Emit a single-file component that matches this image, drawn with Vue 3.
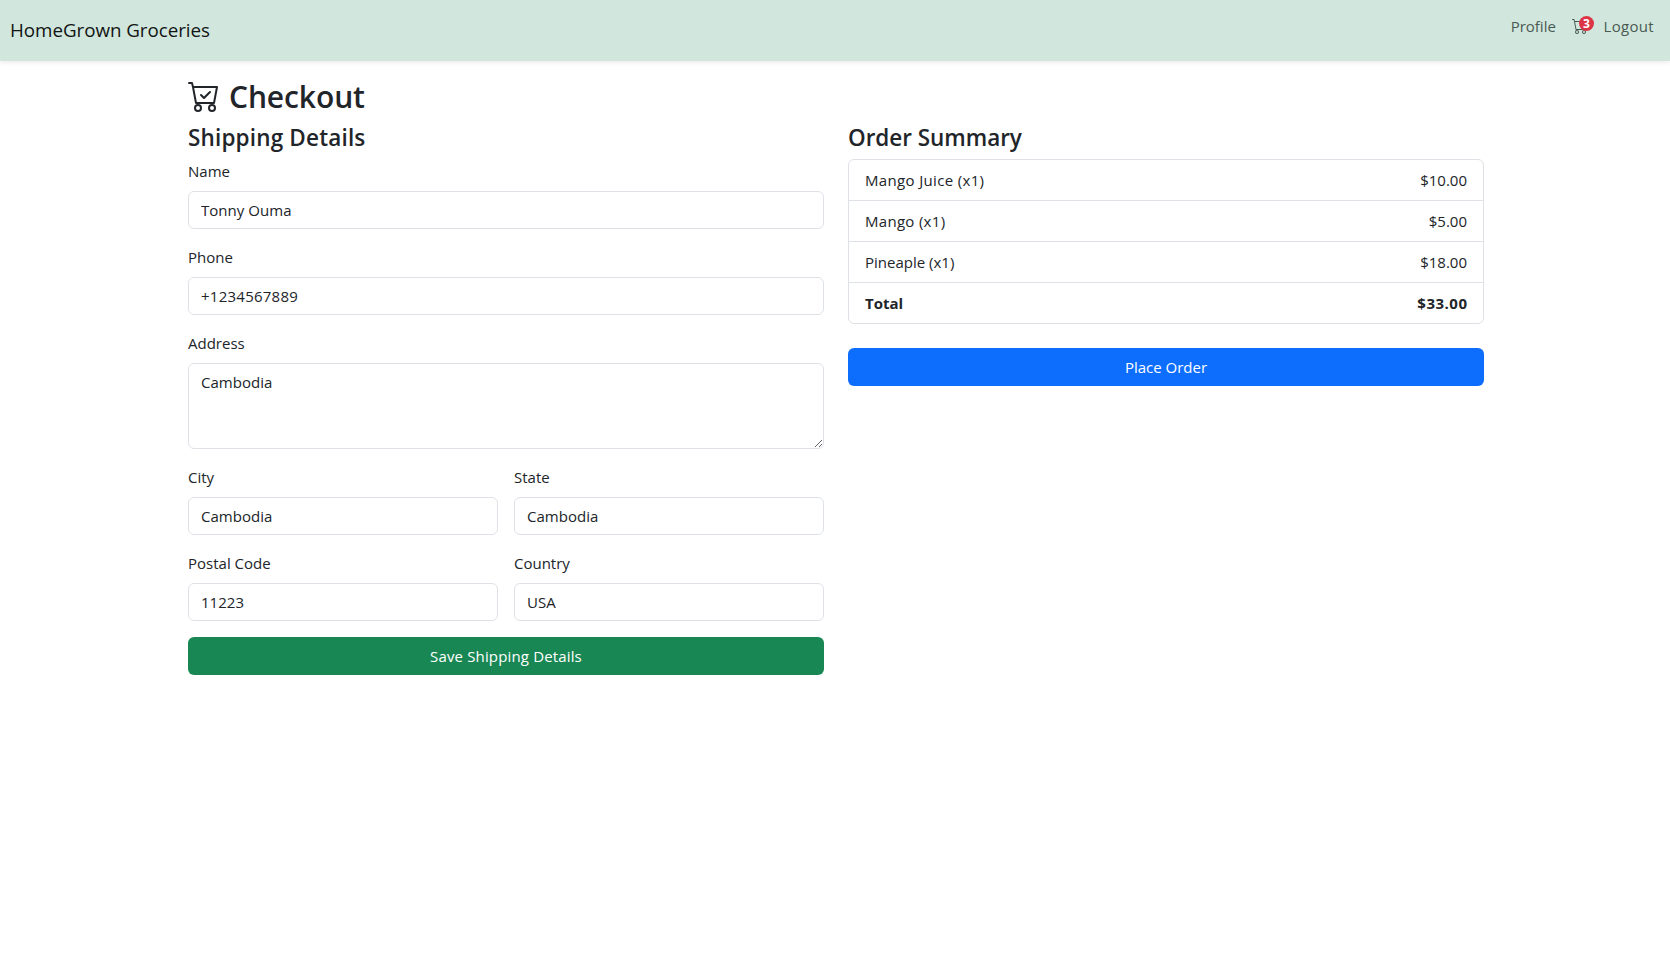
<script setup>
import { ref } from 'vue'

const form = ref({
  name: 'Tonny Ouma',
  phone: '+1234567889',
  address: 'Cambodia',
  city: 'Cambodia',
  state: 'Cambodia',
  postal: '11223',
  country: 'USA',
})
const items = [
  { label: 'Mango Juice (x1)', price: '$10.00' },
  { label: 'Mango (x1)', price: '$5.00' },
  { label: 'Pineaple (x1)', price: '$18.00' },
]
</script>

<template>
  <div class="page">
    <nav class="navbar">
      <a class="brand">HomeGrown Groceries</a>
      <div class="links">
        <a class="nav-link">Profile</a>
        <a class="cart">
          <svg width="16" height="16" viewBox="0 0 16 16" fill="currentColor"><path d="M0 1.5A.5.5 0 0 1 .5 1H2a.5.5 0 0 1 .485.379L2.89 3H14.5a.5.5 0 0 1 .491.592l-1.5 8A.5.5 0 0 1 13 12H4a.5.5 0 0 1-.491-.408L2.01 3.607 1.61 2H.5a.5.5 0 0 1-.5-.5M3.102 4l1.313 7h8.17l1.313-7zM5 12a2 2 0 1 0 0 4 2 2 0 0 0 0-4m7 0a2 2 0 1 0 0 4 2 2 0 0 0 0-4m-7 1a1 1 0 1 1 0 2 1 1 0 0 1 0-2m7 0a1 1 0 1 1 0 2 1 1 0 0 1 0-2" /></svg>
          <span class="badge">3</span>
        </a>
        <a class="nav-link logout">Logout</a>
      </div>
    </nav>
    <main class="container">
      <h2>
        <svg width="32" height="32" viewBox="0 0 16 16" fill="currentColor"><path d="M11.354 6.354a.5.5 0 0 0-.708-.708L8 8.293 6.854 7.146a.5.5 0 1 0-.708.708l1.5 1.5a.5.5 0 0 0 .708 0z" /><path d="M.5 1a.5.5 0 0 0 0 1h1.11l.401 1.607 1.498 7.985A.5.5 0 0 0 4 12h1a2 2 0 1 0 0 4 2 2 0 0 0 0-4h7a2 2 0 1 0 0 4 2 2 0 0 0 0-4h1a.5.5 0 0 0 .491-.408l1.5-8A.5.5 0 0 0 14.5 3H2.89l-.405-1.621A.5.5 0 0 0 2 1zm3.915 10L3.102 4h10.796l-1.313 7zM6 14a1 1 0 1 1-2 0 1 1 0 0 1 2 0m7 0a1 1 0 1 1-2 0 1 1 0 0 1 2 0" /></svg>
        <span>Checkout</span>
      </h2>
      <div class="columns">
        <section>
          <h3 class="shipping">Shipping Details</h3>
          <form class="form" @submit.prevent>
            <div class="field wide"><label>Name</label><input v-model="form.name" type="text" /></div>
            <div class="field wide"><label>Phone</label><input v-model="form.phone" class="phone" type="text" /></div>
            <div class="field wide"><label>Address</label><textarea v-model="form.address" rows="3"></textarea></div>
            <div class="field"><label>City</label><input v-model="form.city" type="text" /></div>
            <div class="field"><label>State</label><input v-model="form.state" type="text" /></div>
            <div class="field"><label>Postal Code</label><input v-model="form.postal" type="text" /></div>
            <div class="field"><label>Country</label><input v-model="form.country" type="text" /></div>
            <button class="btn success wide">Save Shipping Details</button>
          </form>
        </section>
        <section>
          <h3>Order Summary</h3>
          <ul class="list">
            <li v-for="item in items" :key="item.label"><span class="label">{{ item.label }}</span><span>{{ item.price }}</span></li>
            <li class="total"><span>Total</span><span class="sum">$33.00</span></li>
          </ul>
          <button class="btn primary">Place Order</button>
        </section>
      </div>
    </main>
  </div>
</template>

<style>
body { margin: 0; background: #fff; }
</style>

<style scoped>
* { box-sizing: border-box; }
.page { min-height: 968px; color: #212529; font: 15px/24px "Open Sans", "Noto Sans", sans-serif; }
.navbar { height: 61px; padding: 0 16px 0 10px; display: flex; align-items: center; justify-content: space-between; background: #d1e7dd; box-shadow: 0 2px 4px rgba(0, 0, 0, .075); }
.brand { margin-bottom: 2px; font-size: 18.8px; line-height: 30px; letter-spacing: -.04px; color: #111413; }
.links { display: flex; align-items: center; height: 24px; margin-bottom: 10px; color: #4a5a53; }
.cart { position: relative; width: 16px; height: 16px; margin: 1px 15.6px 0 16px; }
.cart svg { display: block; }
.logout { letter-spacing: .32px; }
.badge { position: absolute; left: 7px; top: -2px; width: 15px; height: 15px; border-radius: 8px; background: #dc3545; color: #fff; font-size: 12px; font-weight: 700; line-height: 15px; text-align: center; }
.container { width: 1296px; margin: 0 0 0 188px; padding-top: 17px; }
h2, h3 { margin: 0; font-weight: 600; }
h2 { display: flex; height: 38px; gap: 9px; align-items: center; margin-bottom: 8px; font-size: 30px; line-height: 38px; letter-spacing: -.1px; }
h2 svg { margin-top: -3px; }
h3 { height: 35px; font-size: 22.5px; line-height: 28px; letter-spacing: -.04px; }
.shipping { letter-spacing: .17px; }
.columns { display: grid; grid-template-columns: 1fr 1fr; gap: 24px; align-items: start; }
.form { display: grid; grid-template-columns: 1fr 1fr; gap: 16px; }
.wide { grid-column: 1 / -1; }
.field { display: flex; flex-direction: column; gap: 8px; min-width: 0; }
input, textarea { display: block; width: 100%; height: 38px; margin: 0; padding: 6px 12px; border: 1px solid #dee2e6; border-radius: 6px; background: #fff; color: inherit; font: inherit; letter-spacing: .04px; outline: 0; }
.phone { letter-spacing: .25px; }
textarea { height: 86px; resize: vertical; }
.list { margin: 0 0 24px; padding: 0; list-style: none; border: 1px solid #dee2e6; border-radius: 6px; }
.list li { display: flex; justify-content: space-between; padding: 8px 16px; }
.list li + li { border-top: 1px solid #dee2e6; }
.list li:nth-child(1) .label { letter-spacing: .34px; }
.list li:nth-child(2) .label { letter-spacing: .3px; }
.total { font-weight: 700; }
.total .sum { letter-spacing: .5px; margin-right: -.5px; }
.btn { width: 100%; height: 38px; padding: 0; border: 0; border-radius: 6px; color: #fff; font: inherit; }
.success { background: #198754; letter-spacing: .15px; }
.primary { background: #0d6efd; }
</style>
